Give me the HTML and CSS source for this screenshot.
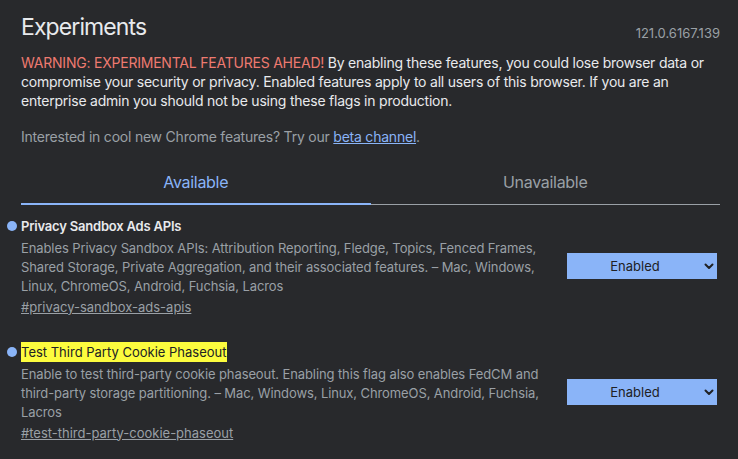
FILE: index.html
```html
<!DOCTYPE html>
<html lang="en">
<head>
<meta charset="utf-8">
<title>Experiments</title>
<link rel="stylesheet" href="styles.css">
</head>
<body>
<div class="page">
  <header class="head">
    <h1 class="title">Experiments</h1>
    <span class="version">121.0.6167.139</span>
  </header>
  <p class="warning"><span class="warn">WARNING: EXPERIMENTAL FEATURES AHEAD!</span> By enabling these features, you could lose browser data or compromise your security or privacy. Enabled features apply to all users of this browser. If you are an enterprise admin you should not be using these flags in production.</p>
  <p class="promo">Interested in cool new Chrome features? Try our <a class="link" href="#">beta channel</a>.</p>

  <div class="tabs">
    <div class="tab active">Available</div>
    <div class="tab">Unavailable</div>
  </div>

  <div class="experiment">
    <div class="info">
      <h2 class="name"><span class="dot"></span><span>Privacy Sandbox Ads APIs</span></h2>
      <p class="desc">Enables Privacy Sandbox APIs: Attribution Reporting, Fledge, Topics, Fenced Frames, Shared Storage, Private Aggregation, and their associated features. – Mac, Windows, Linux, ChromeOS, Android, Fuchsia, Lacros</p>
      <a class="permalink" href="#">#privacy-sandbox-ads-apis</a>
    </div>
    <div class="control">
      <div class="select"><span class="select-label">Enabled</span><svg class="chev" width="10" height="7" viewBox="0 0 10 7"><polyline points="1.5,1.5 5,5 8.5,1.5" fill="none" stroke="#202124" stroke-width="2" stroke-linecap="round" stroke-linejoin="round"/></svg></div>
    </div>
  </div>

  <div class="experiment">
    <div class="info">
      <h2 class="name"><span class="dot"></span><mark class="hl">Test Third Party Cookie Phaseout</mark></h2>
      <p class="desc">Enable to test third-party cookie phaseout. Enabling this flag also enables FedCM and third-party storage partitioning. – Mac, Windows, Linux, ChromeOS, Android, Fuchsia, Lacros</p>
      <a class="permalink" href="#">#test-third-party-cookie-phaseout</a>
    </div>
    <div class="control">
      <div class="select"><span class="select-label">Enabled</span><svg class="chev" width="10" height="7" viewBox="0 0 10 7"><polyline points="1.5,1.5 5,5 8.5,1.5" fill="none" stroke="#202124" stroke-width="2" stroke-linecap="round" stroke-linejoin="round"/></svg></div>
    </div>
  </div>
</div>
</body>
</html>
```

FILE: styles.css
```css
html, body {
  margin: 0;
  padding: 0;
  background: #28292c;
}
body {
  font-family: Inter, "Noto Sans", sans-serif;
  color: #e8eaed;
  overflow: hidden;
}
.page {
  padding: 13px 18px 0 21px;
}
.head {
  display: flex;
  justify-content: space-between;
  align-items: flex-end;
}
.title {
  margin: 0;
  font-size: 23px;
  font-weight: 400;
  line-height: 28px;
  letter-spacing: -0.9px;
}
.version {
  font-size: 13px;
  color: #9aa0a6;
  line-height: 16px;
  margin-bottom: 0;
}
.warning {
  margin: 12px 0 0;
  font-size: 14px;
  line-height: 19.2px;
  letter-spacing: -0.22px;
}
.warn {
  color: #ee7a70;
}
.promo {
  margin: 16px 0 0;
  font-size: 14px;
  line-height: 19px;
  color: #9aa0a6;
  letter-spacing: -0.22px;
}
.link {
  color: #8ab4f8;
}
.tabs {
  display: flex;
  margin-top: 26px;
}
.tab {
  flex: 1;
  text-align: center;
  font-size: 16px;
  line-height: 20px;
  letter-spacing: -0.3px;
  color: #9aa0a6;
  padding-bottom: 12px;
  border-bottom: 1px solid #9aa0a6;
}
.tab.active {
  color: #8ab4f8;
  border-bottom: 2px solid #8ab4f8;
  padding-bottom: 11px;
}
.experiment {
  display: flex;
  align-items: center;
  gap: 21px;
  margin-top: 11px;
}
.experiment + .experiment {
  margin-top: 25px;
}
.info {
  flex: 0 0 525px;
}
.name {
  display: flex;
  align-items: center;
  gap: 4px;
  margin: 0 0 0 -14px;
  font-size: 13px;
  font-weight: 600;
  line-height: 20px;
  letter-spacing: -0.2px;
}
.dot {
  width: 10px;
  height: 10px;
  border-radius: 50%;
  background: #8ab4f8;
}
.hl {
  display: inline-block;
  background: #fcfc3e;
  color: #202124;
  font-weight: 400;
  line-height: 20px;
  letter-spacing: 0;
}
.desc {
  margin: 3px 0 0;
  font-size: 13px;
  line-height: 19px;
  letter-spacing: -0.1px;
  color: #9aa0a6;
}
.permalink {
  display: inline-block;
  margin-top: 2px;
  font-size: 13px;
  line-height: 19px;
  color: #9aa0a6;
}
.control {
  flex: 0 0 150px;
}
.select {
  position: relative;
  height: 26px;
  background: #8ab4f8;
  color: #202124;
  font-size: 13px;
  display: flex;
  align-items: center;
  justify-content: center;
}
.select-label {
  margin-left: -14px;
}
.chev {
  position: absolute;
  right: 3px;
  top: 10px;
}
```
